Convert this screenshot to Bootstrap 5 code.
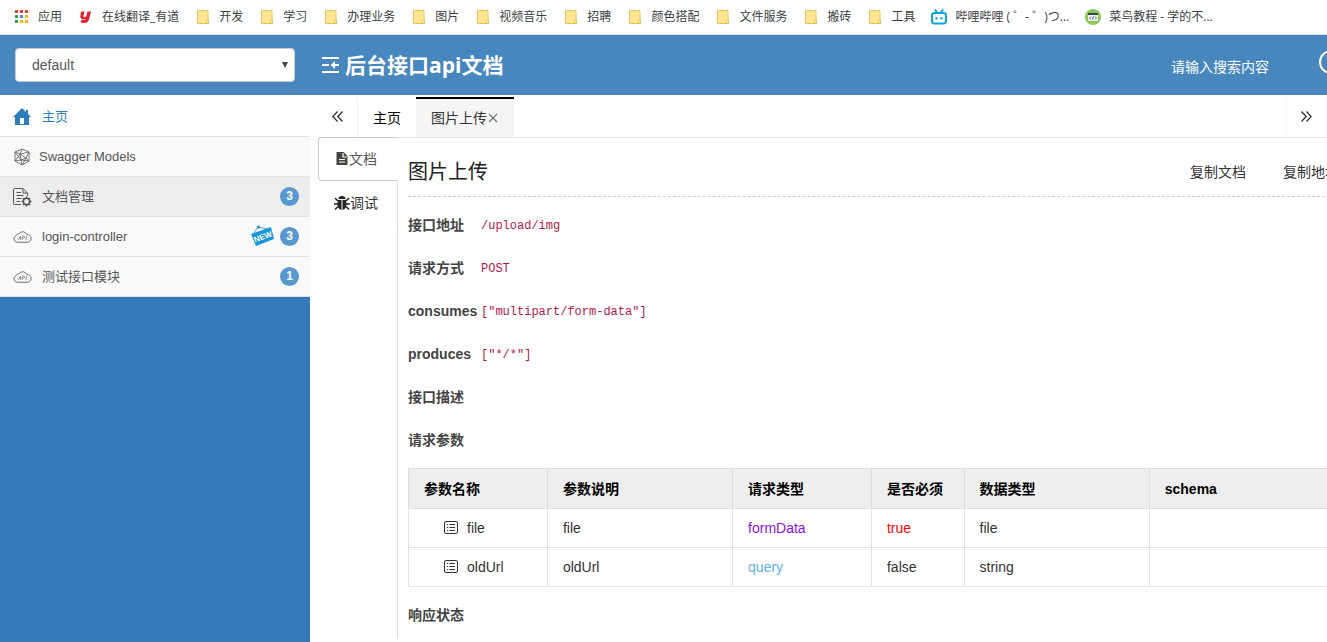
<!DOCTYPE html>
<html lang="zh-CN">
<head>
<meta charset="utf-8">
<meta name="viewport" content="width=device-width, initial-scale=1">
<title>后台接口api文档</title>
<link href="https://cdn.jsdelivr.net/npm/bootstrap@5.3.0/dist/css/bootstrap.min.css" rel="stylesheet">
<style>
body{font-family:"Liberation Sans","Noto Sans CJK SC",sans-serif;font-size:14px;line-height:20px;color:#333;background:#fff}
a{color:inherit;text-decoration:none}
svg{display:block;flex:none}
.bookmarks{height:35px;padding-left:14px;gap:16px;border-bottom:1px solid #dcdcdc;font:12px/18px "Open Sans","Noto Sans CJK SC",sans-serif;color:#3c4043}
.topbar{height:60px;background:#4787bd;color:#fff}
.side-width{width:310px;flex:none}
.api-group{height:34px;margin:0 15px;width:280px;padding:6px 30px 6px 16px;border:1px solid #ccc;border-radius:4px;font-size:14px;line-height:20px;color:#555;background:#fff url("data:image/svg+xml,%3Csvg xmlns='http://www.w3.org/2000/svg' viewBox='0 0 6 6'%3E%3Cpath fill='%23444' d='M0 0h6L3 6z'/%3E%3C/svg%3E") no-repeat right 6px center/6px 6px}
.brand-title{font:bold 21px/30px "Open Sans","Noto Sans CJK SC",sans-serif}
.search-wrap{margin-right:-14px}
.search-box{width:148px;border:0;background:none;color:#fff;padding:4px 0 0}
.search-box::placeholder{color:#fff;opacity:1}
.sidebar{background:#337ab7}
.menu-item{height:40px;padding:0 11px 0 13px;background:#f9f9f9;border-bottom:1px solid #e2e2e2;font-size:13px;color:#555;gap:10px}
.menu-item.home{height:42px;padding-top:2px;background:#fff;color:#2b7dbc}
.menu-item.chosen{background:#ededed}
.menu-item.models{gap:8px}
.count{width:19px;height:19px;border-radius:50%;background:#5897d0;color:#fff;font:bold 12px/18px "Liberation Sans",sans-serif;text-align:center}
.tags{gap:5px}
.tabbar{height:43px;padding-top:2px;border-bottom:1px solid #e6e6e6}
.tabbar button,.side-tabs button{border:0;background:none;padding:0;color:#000}
.tabbar .roll{width:40px;border:solid #f2f2f2;border-width:0 1px 0 0;display:grid;place-items:center}
.tabbar .roll.next{width:41px;border-left-width:1px}
.tabbar .page-tab{padding:0 15px;border-top:2px solid transparent}
.tabbar .page-tab.active{background:#f5f5f5;border-top-color:#000;color:#333}
.body-row{margin-top:-1px}
.side-tabs{width:80px;flex:none;margin-bottom:4px}
.side-tabs button{height:44px;padding-right:4px;border:1px solid transparent;border-right-color:#ddd;color:#333}
.side-tabs button.active{border-color:#ccc transparent #ccc #ccc;border-radius:4px 0 0 4px;color:#555}
.side-tabs .rest{border-right:1px solid #ddd}
.doc{padding:15px 0 0 10px;margin-right:-8px}
.doc-head{height:45px;padding-bottom:4px;border-bottom:1px dashed #ccc}
.doc-head h1{font-size:20px;line-height:28px;font-weight:400;margin:0;color:#222}
.copy-links{gap:37px;margin-right:-4px}
.fields{margin:0;padding-top:6px}
.field{height:43px}
.field dt{width:73px;color:#444;white-space:nowrap}
.field dd{margin:0}
.field code{font:12px/18px "Liberation Mono",monospace;color:#b4174a}
.params{table-layout:fixed;margin:7px 0 0;border:1px solid #e2e2e2;color:#333}
.params th,.params td{border:1px solid #e2e2e2;padding:9px 15px;line-height:20px;background:none;vertical-align:middle}
.params th{background:#eee;color:#000;height:40px;border-color:#ddd}
.params td{height:39px}
.params .in-form{color:#8a12f0}
.params .in-query{color:#61affe}
.params .required{color:red}
.name-cell{padding-left:20px;gap:9px}
</style>
</head>
<body class="d-flex flex-column min-vh-100 overflow-hidden">
<svg width="0" height="0" class="position-absolute" aria-hidden="true">
  <symbol id="folder" viewBox="0 0 16 16"><path d="M2.500 1.500h10.500v9.500h.5v3.500h-11z" fill="#ffe594" stroke="#e8c44d"/><path d="M11.500 14.500v-3l1.500-1 .5 1v3z" fill="#fff0b8" stroke="#e8c44d"/></symbol>
  <symbol id="cloud" viewBox="0 0 20 14"><path d="M5 12.500A3.600 3.600 0 0 1 3.500 5.500 3 3 0 0 1 6.500 3.500 4.500 4.500 0 0 1 14.500 4.500 4 4 0 0 1 15.500 12.500z" fill="none" stroke="#666"/><path d="M5.500 10 8 6v4M6.500 8.700H8M9.500 10l.8-4h1.500q1 .2.600 1.200-.4 1-1.500 1H10M13.500 10l.8-4" fill="none" stroke="#777" stroke-width=".8"/></symbol>
  <symbol id="leaf" viewBox="0 0 14 14"><rect x=".5" y=".5" width="13" height="12" rx="1.500" fill="none" stroke="#333"/><path d="M3 3.500h1.200M5.500 3.500H11M3 6.500h1.200M5.500 6.500H11M3 9.500h1.200M5.500 9.500H11" stroke="#333"/></symbol>
</svg>

<nav class="bookmarks d-flex align-items-center text-nowrap" aria-label="书签">
  <a href="#" class="d-flex align-items-center gap-2"><svg width="16" height="16"><path d="M1 1h3v3H1zM6 1h3v3H6zM11 1h3v3h-3z" fill="#ea4335"/><path d="M1 6h3v3H1z" fill="#34a058"/><path d="M6 6h3v3H6z" fill="#4285f4"/><path d="M11 6h3v3h-3zM6 11h3v3H6zM11 11h3v3h-3z" fill="#fbb60b"/><path d="M1 11h3v3H1z" fill="#34a058"/></svg>应用</a>
  <a href="#" class="d-flex align-items-center gap-2"><svg width="16" height="16"><path d="M3 2.500h3.500L5.500 7q0 1.200 1 1.200T8.300 7l1.200-4.500H13L11 10.500q-1 3.500-5 3.500-2 0-3.500-.7l1-2.500q3.500 1 4.500-.8-5 1.500-5.700-2Z" fill="#e8222a"/></svg>在线翻译_有道</a>
  <a href="#" class="d-flex align-items-center gap-2"><svg width="16" height="16"><use href="#folder"/></svg>开发</a>
  <a href="#" class="d-flex align-items-center gap-2"><svg width="16" height="16"><use href="#folder"/></svg>学习</a>
  <a href="#" class="d-flex align-items-center gap-2"><svg width="16" height="16"><use href="#folder"/></svg>办理业务</a>
  <a href="#" class="d-flex align-items-center gap-2"><svg width="16" height="16"><use href="#folder"/></svg>图片</a>
  <a href="#" class="d-flex align-items-center gap-2"><svg width="16" height="16"><use href="#folder"/></svg>视频音乐</a>
  <a href="#" class="d-flex align-items-center gap-2"><svg width="16" height="16"><use href="#folder"/></svg>招聘</a>
  <a href="#" class="d-flex align-items-center gap-2"><svg width="16" height="16"><use href="#folder"/></svg>颜色搭配</a>
  <a href="#" class="d-flex align-items-center gap-2"><svg width="16" height="16"><use href="#folder"/></svg>文件服务</a>
  <a href="#" class="d-flex align-items-center gap-2"><svg width="16" height="16"><use href="#folder"/></svg>搬砖</a>
  <a href="#" class="d-flex align-items-center gap-2"><svg width="16" height="16"><use href="#folder"/></svg>工具</a>
  <a href="#" class="d-flex align-items-center gap-2"><svg width="16" height="16" fill="none" stroke="#0da5dc" stroke-width="2"><rect x="1" y="4" width="14" height="10.500" rx="2.500"/><path d="m4 .5 2 3M12 .5l-2 3M5.500 8v2.500M10.500 8v2.500"/></svg>哔哩哔哩 ( ゜- ゜)つ...</a>
  <a href="#" class="d-flex align-items-center gap-2"><svg width="16" height="16"><circle cx="8" cy="8" r="8" fill="#8ac755"/><rect x="3" y="4" width="10" height="8" fill="#eef2f0"/><path d="M3 4h10v2H3z" fill="#33475b"/><path d="M6 7.500 4.500 9 6 10.500M10 7.500 11.500 9 10 10.500M8.500 7.500l-1 3" fill="none" stroke="#33475b" stroke-width=".8"/></svg>菜鸟教程 - 学的不...</a>
</nav>

<header class="topbar d-flex align-items-center overflow-hidden">
  <div class="side-width"><select class="api-group form-select" aria-label="分组"><option>default</option></select></div>
  <div class="d-flex align-items-center ps-2 gap-1 ms-1">
    <svg width="19" height="18" fill="none" stroke="#fff" stroke-width="2"><path d="M0 2h17M0 9h7M0 16h17"/><path d="M17 9h-6"/><path d="m13 5-4.500 4 4.500 4z" fill="#fff" stroke="none"/></svg>
    <span class="brand-title">后台接口api文档</span>
  </div>
  <form class="search-wrap d-flex align-items-center ms-auto">
    <input class="search-box" type="text" placeholder="请输入搜索内容" aria-label="搜索">
    <button type="button" class="border-0 bg-transparent p-0" aria-label="搜索"><svg width="22" height="30" fill="none" stroke="#fff" stroke-width="2"><circle cx="12" cy="12" r="11"/><path d="m19 21 5 5"/></svg></button>
  </form>
</header>

<div class="d-flex flex-grow-1">
  <aside class="sidebar side-width">
    <a href="#" class="menu-item home d-flex align-items-center"><svg width="19" height="18"><path d="M9 0 0 9h2v8h14V9h2l-3-3V2h-2v2z" fill="#2b7dbc"/><path d="M7 10h4v6H7z" fill="#fff"/></svg>主页</a>
    <a href="#" class="menu-item models d-flex align-items-center"><svg width="18" height="18" fill="none" stroke="#666" stroke-width=".9"><path d="m9 1 7 3v9l-7 4-7-4V4zM2 4l5 2 9-2M9 1 7 6l6 4 3-6M7 6l-5 7 6-1 8 1M7 6l1 6 1 5 4-7M2 4l6 8 5-2 3 3"/></svg>Swagger Models</a>
    <a href="#" class="menu-item chosen d-flex align-items-center"><svg width="19" height="20" fill="none" stroke="#555"><path d="M8 17.500H1.500q-1 0-1-1v-14q0-1 1-1H10l4.500 4.500v3M10 1.500V6h4.500M3.500 5.500H8M3.500 8.500h7M3.500 11.500h5M3.500 14.500H7"/><circle cx="13.500" cy="14.500" r="3.200" stroke-width="1.500"/><path stroke-width="1.500" d="M13.500 9.500v2M13.500 17.500v2M8.500 14.500h2M16.500 14.500h2M10 11l1.300 1.300M15.700 16.700 17 18M17 11l-1.300 1.300M11.300 16.700 10 18"/></svg>文档管理<span class="count ms-auto">3</span></a>
    <a href="#" class="menu-item d-flex align-items-center"><svg width="19" height="14"><use href="#cloud"/></svg>login-controller
      <span class="tags d-flex align-items-center ms-auto"><svg width="24" height="24" viewBox="0 0 24 24" role="img" aria-label="NEW"><path d="m3 8 4-6 9 2" fill="none" stroke="#55a9d8"/><circle cx="7.500" cy="2" r="1.500" fill="#1787c8"/><path d="m0 9 20-7 3 12-18 7z" fill="#1995dc"/><text x="12" y="14.500" transform="rotate(-20 12 12)" text-anchor="middle" font-size="8" font-weight="bold" fill="#fff" font-family="Liberation Sans,sans-serif">NEW</text></svg>
      <span class="count">3</span></span></a>
    <a href="#" class="menu-item d-flex align-items-center"><svg width="19" height="14"><use href="#cloud"/></svg>测试接口模块<span class="count ms-auto">1</span></a>
  </aside>

  <main class="flex-grow-1 d-flex flex-column ps-2 overflow-hidden">
    <div class="tabbar d-flex">
      <button type="button" class="roll" aria-label="向左"><svg width="11" height="13" fill="none" stroke="#333" stroke-width="1.300"><path d="M5.500.5.8 5.500l4.700 5M10.500.5 5.800 5.500l4.700 5"/></svg></button>
      <button type="button" class="page-tab">主页</button>
      <button type="button" class="page-tab active d-flex align-items-center">图片上传<svg width="12" height="10" stroke="#777" stroke-width="1.300"><path d="m2 1 8 8M10 1 2 9"/></svg></button>
      <button type="button" class="roll next ms-auto" aria-label="向右"><svg width="11" height="13" fill="none" stroke="#333" stroke-width="1.300"><path d="m.5.500 4.700 5-4.700 5M5.500.5l4.700 5-4.700 5"/></svg></button>
    </div>
    <div class="body-row d-flex flex-grow-1">
      <div class="side-tabs d-flex flex-column">
        <button type="button" class="active d-flex align-items-center justify-content-center"><svg width="14" height="14"><path d="M1.500 0h7l4 4v9h-11z" fill="#444"/><path d="M8 1v4h4M4 7.500h6M4 10h6" stroke="#fff" fill="none" stroke-width="1.200"/></svg>文档</button>
        <button type="button" class="d-flex align-items-center justify-content-center"><svg width="16" height="16"><path d="M4.500 4a3.500 3 0 0 1 7 0zM4 5h3.500v10Q3.500 14 3.500 9zM12 5H8.500v10q4-1 4-6z" fill="#222"/><path d="m1 3 3 3M15 3l-3 3M0 9h4M12 9h4M4 11.500l-3 3M12 11.500l3 3" stroke="#222" stroke-width="1.500"/></svg>调试</button>
        <div class="rest flex-grow-1"></div>
      </div>
      <article class="doc flex-grow-1">
        <div class="doc-head d-flex align-items-center justify-content-between">
          <h1>图片上传</h1>
          <div class="copy-links d-flex text-nowrap"><a href="#">复制文档</a><a href="#">复制地址</a></div>
        </div>
        <dl class="fields">
          <div class="field d-flex align-items-center"><dt>接口地址</dt><dd><code>/upload/img</code></dd></div>
          <div class="field d-flex align-items-center"><dt>请求方式</dt><dd><code>POST</code></dd></div>
          <div class="field d-flex align-items-center"><dt>consumes</dt><dd><code>["multipart/form-data"]</code></dd></div>
          <div class="field d-flex align-items-center"><dt>produces</dt><dd><code>["*/*"]</code></dd></div>
          <div class="field d-flex align-items-center"><dt>接口描述</dt><dd></dd></div>
          <div class="field d-flex align-items-center"><dt>请求参数</dt><dd></dd></div>
        </dl>
        <table class="params table">
          <colgroup><col style="width:15%"><col style="width:20%"><col style="width:15%"><col style="width:10%"><col style="width:20%"><col style="width:20%"></colgroup>
          <thead><tr><th>参数名称</th><th>参数说明</th><th>请求类型</th><th>是否必须</th><th>数据类型</th><th>schema</th></tr></thead>
          <tbody>
            <tr><td><div class="name-cell d-flex align-items-center"><svg width="14" height="14"><use href="#leaf"/></svg>file</div></td><td>file</td><td class="in-form">formData</td><td class="required">true</td><td>file</td><td></td></tr>
            <tr><td><div class="name-cell d-flex align-items-center"><svg width="14" height="14"><use href="#leaf"/></svg>oldUrl</div></td><td>oldUrl</td><td class="in-query">query</td><td>false</td><td>string</td><td></td></tr>
          </tbody>
        </table>
        <dl class="fields"><div class="field d-flex align-items-center"><dt>响应状态</dt><dd></dd></div></dl>
      </article>
    </div>
  </main>
</div>
<script src="https://cdn.jsdelivr.net/npm/bootstrap@5.3.0/dist/js/bootstrap.bundle.min.js"></script>
</body>
</html>
